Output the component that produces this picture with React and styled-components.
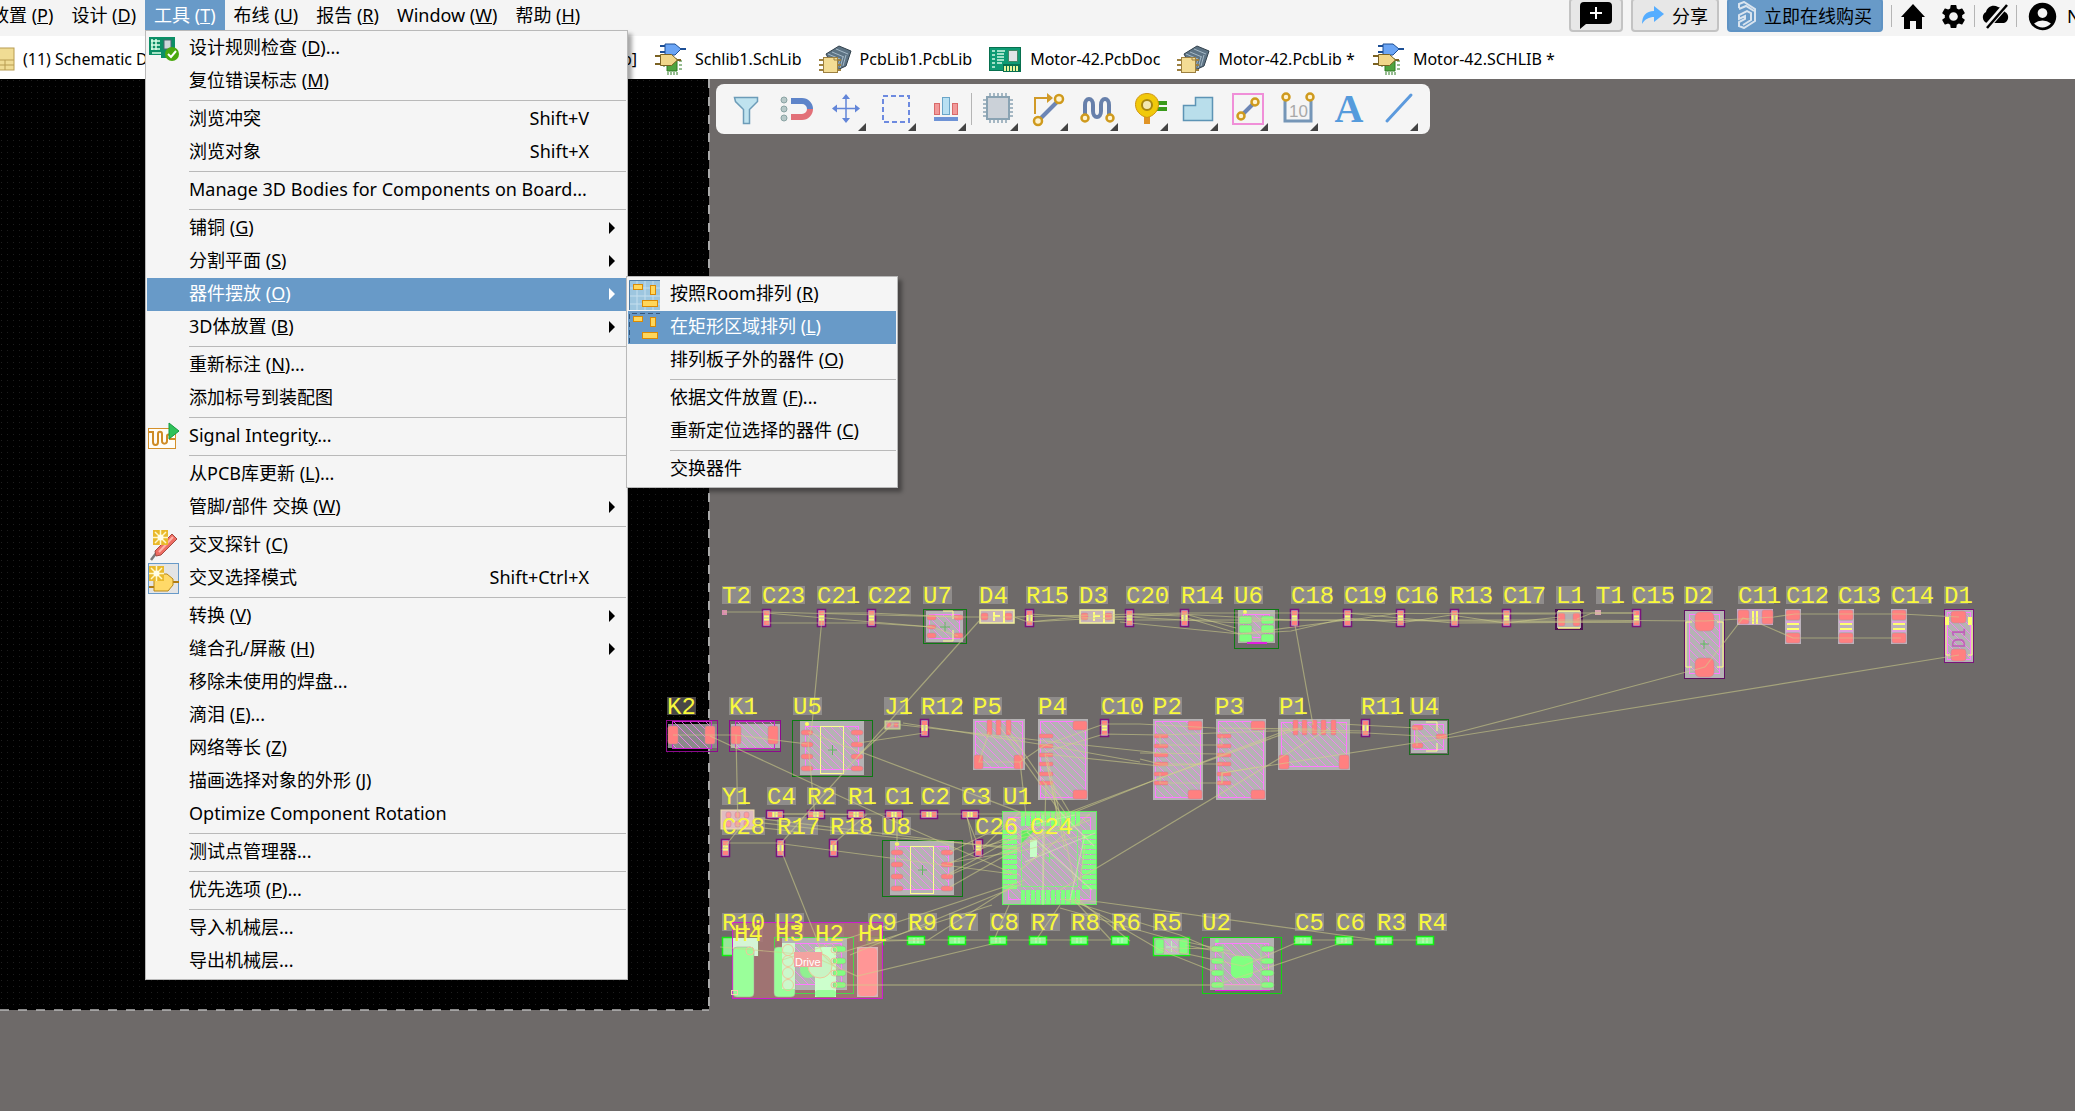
import React from "react";
import styled, { createGlobalStyle } from "styled-components";
import { MdAccountCircle, MdSettings } from "react-icons/md";

const uiFont = `"Noto Sans", "Noto Sans CJK SC", sans-serif`;

const GlobalStyle = createGlobalStyle`
    * {
        box-sizing: border-box;
    }
    body {
        margin: 0;
        overflow: hidden;
        font-family: ${uiFont};
        font-size: 18px;
        color: #000;
        background-color: #6e6a69;
    }
    button {
        font: inherit;
        color: inherit;
        border: none;
        background: none;
        padding: 0;
        white-space: nowrap;
    }
`
const Container = styled.div`
    display: flex;
    flex-direction: column;
    height: 100vh;
`
const MenuBar = styled.header`
    display: flex;
    justify-content: space-between;
    height: 36px;
    background-color: #f4f4f4;
`
const Nav = styled.nav`
    display: flex;
    height: 30px;
    margin-left: -18px;
`
const NavItem = styled.div`
    position: relative;
`
const NavButton = styled.button`
    height: 30px;
    padding: 0 9px;
    line-height: 30px;
    background-color: ${props=>props.$open ? "#689ac8" : "transparent"};
    color: ${props=>props.$open ? "white" : "black"};
`
const Menu = styled.ul`
    position: absolute;
    z-index: 2;
    top: ${props=>props.$sub ? "-2px" : "100%"};
    left: ${props=>props.$sub ? "100%" : "0"};
    width: ${props=>props.$sub ? "272px" : "483px"};
    margin: 0;
    padding: 1px;
    list-style: none;
    color: black;
    background-color: #f5f5f5;
    border: 1px solid #b9b9b9;
    box-shadow: 4px 4px 4px rgba(0, 0, 0, 0.35);
`
const MenuRow = styled.li`
    position: relative;
`
const MenuButton = styled.button`
    display: grid;
    grid-template-columns: 42px 1fr auto 37px;
    align-items: start;
    width: 100%;
    height: 33px;
    line-height: 30px;
    text-align: left;
    background-color: ${props=>props.$active ? "#689ac8" : "transparent"};
    color: ${props=>props.$active ? "white" : "black"};
`
const MenuIcon = styled.svg`
    display: block;
    width: 33px;
    height: 33px;
`
const Arrow = styled.svg`
    width: 6px;
    height: 12px;
    margin: 10px 0 0 20px;
    fill: currentColor;
`
const Separator = styled.li`
    height: 5px;
    padding-top: 2px;
    margin-left: 42px;
    &::after {
        content: "";
        display: block;
        height: 1px;
        background-color: #b9b9b9;
    }
`
const Tools = styled.div`
    display: flex;
    align-items: center;
    gap: 8px;
    height: 32px;
    overflow: hidden;
`
const ToolButton = styled.button`
    display: flex;
    align-items: center;
    justify-content: center;
    gap: 8px;
    height: 34px;
    margin-top: -2px;
    padding: 0 9px;
    border: 2px solid ${props=>props.$primary ? "#5f93c4" : "#c3c3c3"};
    border-radius: 4px;
    background-color: ${props=>props.$primary ? "#689ac8" : "#e7e7e7"};
`
const Status = styled.div`
    display: flex;
    align-items: center;
    height: 32px;
`
const IconButton = styled.button`
    display: flex;
    align-items: center;
    justify-content: center;
    width: ${props=>props.$wide ? "50px" : "41px"};
    height: 32px;
`
const Divider = styled.span`
    width: 1px;
    height: ${props=>props.$tall ? "32px" : "22px"};
    margin-right: ${props=>props.$tall ? "1px" : "0"};
    background-color: #b5b5b5;
`
const UserName = styled.span`
    width: 8px;
    overflow: hidden;
`
const TabBar = styled.div`
    display: flex;
    align-items: center;
    gap: 16px;
    height: 43px;
    padding-top: 2px;
    flex-shrink: 0;
    background-color: white;
    font-size: 16px;
`
const FolderTabs = styled.div`
    display: flex;
    justify-content: space-between;
    flex-shrink: 0;
    width: 656px;
    margin-left: -19px;
`
const Tab = styled.button`
    display: flex;
    align-items: center;
    gap: 8px;
    height: 41px;
`
const TabIcon = styled.svg`
    width: 34px;
    height: 34px;
`
const Workspace = styled.main`
    position: relative;
    flex: 1;
    min-height: 0;
    background-color: #6e6a69;
`
const Board = styled.svg`
    display: block;
    width: 100%;
    height: 100%;
`
const ActiveBar = styled.div`
    position: absolute;
    top: 5px;
    left: 716px;
    display: flex;
    align-items: center;
    height: 50px;
    padding: 0 7px 0 5px;
    border-radius: 8px;
    background-color: #f5f5f5;
`
const ActiveButton = styled.button`
    width: 50px;
    height: 50px;
    svg {
        display: block;
    }
`
const Designator = styled.text`
    font-family: "Liberation Mono", monospace;
    font-size: 24px;
    fill: #f8f83c;
`
const RoomName = styled.text`
    font-family: "Liberation Sans", sans-serif;
    font-size: 11px;
    fill: white;
`

/* "_X" in a label marks the access key */
const Label = ({ text }) => {
    const at = text.indexOf("_");
    if (at < 0) return <span>{text}</span>;
    return (
        <span>{text.slice(0, at)}<u>{text[at + 1]}</u>{text.slice(at + 2)}</span>
    )
}

const Spark = () => (
    <>
        <rect x="2" y="1" width="15" height="15" fill="#e9b92c" />
        <path d="M9.500 1v15M2 8.500h15M4 3l11 11M15 3L4 14" stroke="#fff8c8" strokeWidth="1.500" />
        <circle cx="9.500" cy="8.500" r="3" fill="#fffde8" />
    </>
)
const RoomBlocks = () => (
    <g fill="#ffd75a" stroke="#d98a05" strokeWidth="1">
        <rect x="5.500" y="6.500" width="9" height="5" />
        <rect x="22.500" y="7.500" width="5" height="9" />
        <rect x="14.500" y="22.500" width="15" height="6" />
    </g>
)

const menuIcons = {
    drc: (
        <>
            <rect x="2" y="5" width="26" height="18" fill="#0c8f66" />
            <path d="M4 9h9M4 13h9M4 17h9M5 21h9M5 7v11M9 7v11" stroke="#d8ffe6" strokeWidth="1.500" />
            <rect x="17" y="8" width="7" height="9" fill="#cfd8dc" stroke="#4d6770" />
            <path d="M14 23v3h8v-3" fill="#0c8f66" />
            <circle cx="25" cy="22" r="7" fill="#4aa80f" />
            <path d="M21 22l3 3 5-6" stroke="white" strokeWidth="2" fill="none" />
        </>
    ),
    signal: (
        <>
            <rect x="1.500" y="8.500" width="27" height="20" fill="#fffdf6" stroke="#d4902a" />
            <path d="M2 12h4v10c0 4 5 4 5 0v-8c0-3 4-3 4 0v7c0 4 5 3 5 0v-5c0-2 3-2 3 0v3h5" fill="none" stroke="#cf8b24" strokeWidth="2" />
            <path d="M22 3v16l10-8z" fill="#2fc25a" stroke="#169a40" />
        </>
    ),
    probe: (
        <>
            <path d="M4 31l6-8" stroke="#7a7a7a" strokeWidth="2.500" />
            <path d="M8 22L25 5l5 5-16 16-5 1z" fill="#ee6d63" stroke="#a54a42" />
            <path d="M12 23L26 8" stroke="#ffb3aa" strokeWidth="2" />
            <g transform="translate(4 0)"><Spark /></g>
        </>
    ),
    select: (
        <>
            <rect x="1.500" y="1.500" width="30" height="30" fill="#e4e4e4" stroke="#689ac8" />
            <path d="M2 25h6M26 20h6" stroke="#b07c10" strokeWidth="2" />
            <path d="M7 12h13l6 5v6l-5 6H7z" fill="#ffd968" stroke="#b98714" />
            <g transform="translate(0 3)"><Spark /></g>
        </>
    ),
    room: (
        <>
            <rect x="1" y="2" width="31" height="30" fill="#9dc6df" />
            <path d="M1 10h31M1 18h31M1 26h31M9 2v30M17 2v30M25 2v30" stroke="#c5dfee" />
            <path d="M1.500 32V2.500H32" stroke="#4f7ca5" fill="none" />
            <RoomBlocks />
        </>
    ),
    area: (
        <>
            <path d="M1.500 32V2.500H32" stroke="#35567a" fill="none" strokeDasharray="5 3" />
            <g transform="translate(0 -1)"><RoomBlocks /></g>
        </>
    ),
}

const placement = [
    { text: "按照Room排列 (_R)", icon: "room" },
    { text: "在矩形区域排列 (_L)", icon: "area", active: true },
    { text: "排列板子外的器件 (_O)" },
    null,
    { text: "依据文件放置 (_F)..." },
    { text: "重新定位选择的器件 (_C)" },
    null,
    { text: "交换器件" },
]

const toolsMenu = [
    { text: "设计规则检查 (_D)...", icon: "drc" },
    { text: "复位错误标志 (_M)" },
    null,
    { text: "浏览冲突", keys: "Shift+V" },
    { text: "浏览对象", keys: "Shift+X" },
    null,
    { text: "Manage 3D Bodies for Components on Board..." },
    null,
    { text: "铺铜 (_G)", more: true },
    { text: "分割平面 (_S)", more: true },
    { text: "器件摆放 (_O)", more: true, active: true, items: placement },
    { text: "3D体放置 (_B)", more: true },
    null,
    { text: "重新标注 (_N)..." },
    { text: "添加标号到装配图" },
    null,
    { text: "Signal Integrit_y...", icon: "signal" },
    null,
    { text: "从PCB库更新 (_L)..." },
    { text: "管脚/部件 交换 (_W)", more: true },
    null,
    { text: "交叉探针 (_C)", icon: "probe" },
    { text: "交叉选择模式", icon: "select", keys: "Shift+Ctrl+X" },
    null,
    { text: "转换 (_V)", more: true },
    { text: "缝合孔/屏蔽 (_H)", more: true },
    { text: "移除未使用的焊盘..." },
    { text: "滴泪 (_E)..." },
    { text: "网络等长 (_Z)" },
    { text: "描画选择对象的外形 (_J)" },
    { text: "Optimize Component Rotation" },
    null,
    { text: "测试点管理器..." },
    null,
    { text: "优先选项 (_P)..." },
    null,
    { text: "导入机械层..." },
    { text: "导出机械层..." },
]

const navItems = [
    { text: "放置 (_P)" },
    { text: "设计 (_D)" },
    { text: "工具 (_T)", items: toolsMenu },
    { text: "布线 (_U)" },
    { text: "报告 (_R)" },
    { text: "Window (_W)" },
    { text: "帮助 (_H)" },
]

const MenuList = ({ items, sub }) => (
    <Menu $sub={sub}>
        {items.map((item, i) => item === null ? <Separator key={i} /> : (
            <MenuRow key={i}>
                <MenuButton $active={item.active}>
                    <MenuIcon viewBox="0 0 33 33" fill="none">{menuIcons[item.icon]}</MenuIcon>
                    <Label text={item.text} />
                    <span>{item.keys}</span>
                    {item.more && <Arrow viewBox="0 0 6 12"><path d="M0 0l6 6-6 6z" /></Arrow>}
                </MenuButton>
                {item.items && <MenuList items={item.items} sub />}
            </MenuRow>
        ))}
    </Menu>
)

const tabIcons = {
    folder: (
        <>
            <rect x="12" y="6" width="21" height="22" fill="#f0dc94" stroke="#b89c50" />
            <path d="M12 18h21M12 23h21M24 18v10" stroke="#b89c50" />
        </>
    ),
    schlib: (
        <>
            <path d="M14 17h10v12H14z" fill="#4fa33f" stroke="#2f7a25" />
            <path d="M12 20h-2M12 24h-2M26 19h3M26 23h3M26 27h3M15 30v3M18 30v3M21 30v3M24 30v3" stroke="#2f7a25" />
            <path d="M7 4h6M7 10h6M27 7h6" stroke="#1d4f95" strokeWidth="2" />
            <path d="M12 2h10l6 5-6 6H12z" fill="#6ba5f5" stroke="#1d4f95" />
            <path d="M2 14h6M2 22h6M24 18h4" stroke="#7b6222" strokeWidth="2" />
            <path d="M7.500 12.500h11l6 5.500-6 5.500h-11z" fill="#f0d68a" stroke="#7b6222" />
        </>
    ),
    pcblib: (
        <>
            <path d="M8 12L21 4l12 5-5 15-11 5z" fill="#5d7384" stroke="#33424d" />
            <path d="M10 12l12 5M14 10l12 5M18 7l12 5M22 17l-3 11M25 15l-3 11M28 13l-3 11" stroke="#a6bac8" />
            <path d="M1 18h5M1 23h5M1 28h5M20 18h3M20 23h3M20 28h3" stroke="#9d8040" strokeWidth="2" />
            <rect x="5.500" y="15.500" width="14" height="15" fill="#f3dc94" stroke="#9d8040" />
            <path d="M16 15.500v2.500h3.500" stroke="#9d8040" />
        </>
    ),
    pcbdoc: (
        <>
            <rect x="1.500" y="5.500" width="31" height="23" fill="#0e9b74" stroke="#08704f" />
            <path d="M4 9h3M4 13h3M4 17h3M4 21h3M4 25h3M9 9h8M9 12h7M9 15h7M9 18h7M9 21h5" stroke="#d4f9e4" strokeWidth="1.500" />
            <rect x="20.500" y="8.500" width="9" height="11" fill="#dfe5e7" stroke="#486" />
            <path d="M15 22h18v8H15z" fill="#08704f" />
            <path d="M17 24v5M20 24v5M23 24v5M26 24v5M29 24v5" stroke="#e8f59b" strokeWidth="2" />
        </>
    ),
}

const tabs = [
    { text: "Schlib1.SchLib", icon: "schlib" },
    { text: "PcbLib1.PcbLib", icon: "pcblib" },
    { text: "Motor-42.PcbDoc", icon: "pcbdoc" },
    { text: "Motor-42.PcbLib *", icon: "pcblib" },
    { text: "Motor-42.SCHLIB *", icon: "schlib" },
]

const node = { fill: "#fff3cf", stroke: "#cf9a1d", strokeWidth: 2.5 }

const activeTools = [
    { name: "Filter", art: <path d="M13.500 13.500h23v4l-8 8v14h-6v-14l-8-8z" fill="#bfe3ef" stroke="#6c9cb8" strokeWidth="1.500" /> },
    { name: "Snap", art: (
        <>
            <path d="M20 17h11a8 8 0 0 1 8 8" stroke="#5e84c9" strokeWidth="6" />
            <path d="M20 33h11a8 8 0 0 0 8-8" stroke="#e27078" strokeWidth="6" />
            <circle cx="13" cy="16" r="3" fill="#b8c9c9" stroke="#8aa3a3" />
            <circle cx="13" cy="25" r="3" fill="#b8c9c9" stroke="#8aa3a3" />
            <circle cx="13" cy="34" r="3" fill="#b8c9c9" stroke="#8aa3a3" />
        </>
    ) },
    { name: "Move", menu: true, art: (
        <>
            <path d="M25 13v23M14 24.500h22" stroke="#6285d8" strokeWidth="1.500" />
            <path d="M25 10l-4 5h8zM25 39l-4-5h8zM11 24.500l5-4v8zM39 24.500l-5-4v8z" fill="#6285d8" />
        </>
    ) },
    { name: "Select", menu: true, art: <rect x="12" y="12" width="26" height="26" stroke="#6d8ae0" strokeWidth="2" strokeDasharray="5 3" /> },
    { name: "Align", menu: true, art: (
        <>
            <rect x="13.500" y="19.500" width="5" height="11" fill="#f29a9a" stroke="#d96a6a" />
            <rect x="21.500" y="13.500" width="7" height="17" fill="#b8e0f2" stroke="#6aa5c8" />
            <rect x="31.500" y="19.500" width="5" height="11" fill="#f29a9a" stroke="#d96a6a" />
            <rect x="13" y="33" width="24" height="4" fill="#6e93d6" />
        </>
    ) },
    { name: "Component", menu: true, art: (
        <>
            <path d="M17 9v30M21 9v30M25 9v30M29 9v30M33 9v30M10 16h30M10 20h30M10 24h30M10 28h30M10 32h30" stroke="#8aa3b3" strokeWidth="1.500" />
            <rect x="14" y="13" width="22" height="22" fill="#cbd1d8" stroke="#8aa3b3" strokeWidth="2" />
        </>
    ) },
    { name: "Route", menu: true, art: (
        <>
            <path d="M12 30V14h14" stroke="#d19a27" strokeWidth="2" />
            <path d="M24 9l6 5-6 5z" fill="#d19a27" />
            <path d="M15 37L36 16" stroke="#6d86b5" strokeWidth="4" />
            <circle cx="15" cy="37" r="4" {...node} /><circle cx="36" cy="15" r="4" {...node} />
        </>
    ) },
    { name: "Tune", menu: true, art: (
        <>
            <path d="M12 33V21c0-8 8-8 8 0v6c0 8 8 8 8 0v-6c0-8 8-8 8 0v12" stroke="#6780ab" strokeWidth="4" />
            <circle cx="12" cy="34" r="3.500" {...node} /><circle cx="37" cy="34" r="3.500" {...node} />
        </>
    ) },
    { name: "Via", menu: true, art: (
        <>
            <path d="M30 19h14M30 25h14" stroke="#399a1a" strokeWidth="4" />
            <path d="M24 28v12" stroke="#e09426" strokeWidth="6" />
            <path d="M24 9.500c7 0 11.500 5 11.500 11S31 32 24 33.500C17 32 12.500 26.500 12.500 20.500S17 9.500 24 9.500z" fill="#f1c90b" stroke="#cf9310" />
            <circle cx="24" cy="21" r="5" fill="#f4e8b2" stroke="#a88610" strokeWidth="2" />
        </>
    ) },
    { name: "Polygon", menu: true, art: <path d="M10.500 21.500h12v-8h17v23h-29z" fill="#b9deeb" stroke="#5d94b5" strokeWidth="1.500" /> },
    { name: "Room", menu: true, art: (
        <>
            <rect x="10" y="10" width="30" height="30" stroke="#f08fd8" strokeWidth="2" />
            <path d="M18 32l14-14" stroke="#6d86b5" strokeWidth="4" />
            <circle cx="18" cy="32" r="3.500" {...node} /><circle cx="32" cy="18" r="3.500" {...node} />
        </>
    ) },
    { name: "Dimension", menu: true, art: (
        <>
            <path d="M12 17v20h26V17" stroke="#7596b7" strokeWidth="3" />
            <circle cx="13" cy="13" r="3.500" {...node} /><circle cx="37" cy="13" r="3.500" {...node} />
            <text x="16" y="33" fontSize="17" fill="#a9a9a9" fontFamily="Liberation Sans">10</text>
        </>
    ) },
    { name: "Text", art: <text x="26" y="38" textAnchor="middle" fontSize="40" fill="#559bdc" fontWeight="bold" fontFamily="Liberation Serif">A</text> },
    { name: "Line", menu: true, art: <path d="M14 37l24-26" stroke="#5c9add" strokeWidth="3" strokeLinecap="round" /> },
]

/* designators: name, left, top */
const designators = [
    ["T2", 722, 586], ["C23", 762, 586], ["C21", 817, 586], ["C22", 868, 586], ["U7", 923, 586], ["D4", 979, 586],
    ["R15", 1026, 586], ["D3", 1079, 586], ["C20", 1126, 586], ["R14", 1181, 586], ["U6", 1234, 586], ["C18", 1291, 586],
    ["C19", 1344, 586], ["C16", 1396, 586], ["R13", 1450, 586], ["C17", 1503, 586], ["L1", 1556, 586], ["T1", 1596, 586],
    ["C15", 1632, 586], ["D2", 1684, 586], ["C11", 1738, 586], ["C12", 1786, 586], ["C13", 1838, 586], ["C14", 1891, 586], ["D1", 1944, 586],
    ["K2", 667, 697], ["K1", 729, 697], ["U5", 793, 697], ["J1", 884, 697], ["R12", 921, 697], ["P5", 973, 697], ["P4", 1038, 697],
    ["C10", 1101, 697], ["P2", 1153, 697], ["P3", 1215, 697], ["P1", 1279, 697], ["R11", 1361, 697], ["U4", 1410, 697],
    ["Y1", 722, 787], ["C4", 767, 787], ["R2", 807, 787], ["R1", 848, 787], ["C1", 885, 787], ["C2", 921, 787], ["C3", 962, 787], ["U1", 1003, 787],
    ["C28", 722, 817], ["R17", 777, 817], ["R18", 830, 817], ["U8", 882, 817], ["C26", 975, 817], ["C24", 1030, 817],
    ["R10", 722, 913], ["U3", 775, 913], ["C9", 868, 913], ["R9", 908, 913], ["C7", 949, 913], ["C8", 990, 913], ["R7", 1031, 913],
    ["R8", 1071, 913], ["R6", 1112, 913], ["R5", 1153, 913], ["U2", 1202, 913], ["C5", 1295, 913], ["C6", 1336, 913], ["R3", 1377, 913], ["R4", 1418, 913],
    ["H4", 734, 924], ["H3", 775, 924], ["H2", 815, 924], ["H1", 858, 924],
]

/* small upright parts: left, top, resistor */
const uprights = [
    [762, 609], [817, 609], [867, 609], [1025, 609, 1], [1125, 609], [1180, 609, 1], [1290, 609], [1343, 609], [1396, 609],
    [1450, 609, 1], [1502, 609], [1632, 609], [920, 719, 1], [1100, 719], [1361, 719, 1],
    [721, 839], [776, 839, 1], [829, 839, 1], [974, 839],
]
const flats = [[766, 810], [807, 810], [847, 810], [885, 810], [920, 810], [961, 810]]
const greens = [866, 907, 948, 989, 1029, 1070, 1111, 1294, 1335, 1375, 1416]

const nets = [
    "724,612 765,612 957,617 1014,617 1180,613 1290,613 1556,614", "766,613 932,627 958,636", "766,623 870,623 932,627",
    "821,613 870,613 958,617", "822,618 812,725 808,742 815,818", "979,621 904,705 808,812 777,848", "1014,617 1028,622 1080,617",
    "1029,614 1128,620 1290,620 1640,622", "1028,622 1180,614 1290,620", "1110,616 1240,623 1270,620 1556,620",
    "1130,614 1181,616 1240,634 1347,620", "1120,622 1240,634 1291,631 1347,618 1400,623 1451,615 1505,623 1560,617",
    "1185,614 1236,628", "1346,613 1453,623 1636,622", "1400,613 1344,621", "1450,613 1556,613 1636,613", "1577,619 1592,613 1636,613",
    "1556,620 1705,621 1774,617 1795,614 1901,614 1959,617", "1705,667 1743,618 1763,625 1793,638 1901,638", "1705,667 1540,711 1440,737",
    "1959,655 1540,723 1446,738 1222,773 1222,783", "1295,625 1313,725", "673,735 736,735 807,744", "736,735 738,830 722,850",
    "710,736 900,824 1012,873", "808,732 1020,812", "858,743 924,733", "893,724 858,756", "893,724 1045,741 1160,753",
    "903,723 1045,745 1140,762", "989,732 979,762 1020,762 1045,745", "1020,762 1026,815", "1000,727 1060,812", "1008,730 1070,820",
    "1045,745 1104,724 1140,724 1215,728 1314,729", "1045,752 1104,734 1160,735 1300,730 1365,731", "1045,754 1160,766 1201,764",
    "1160,736 1160,745 1222,745 1222,736", "1160,773 1160,783 1222,783 1222,773 1258,767", "1140,753 1222,754", "1140,759 1160,764 1222,764",
    "1330,728 1060,890", "1300,728 1160,778 1070,812", "1290,729 1150,782 1075,812", "1340,724 1417,728 1417,746", "1300,732 1366,733 1441,737",
    "1045,754 1060,830", "1047,763 1065,850", "1046,783 1043,890", "1052,783 1070,813", "1047,756 1074,880",
    "775,814 924,814 1060,814", "754,818 1020,850", "754,822 900,838 1020,848", "723,843 776,843 1020,875", "735,825 800,832",
    "776,814 822,814 866,815 832,845", "897,814 897,850", "967,816 974,850", "966,815 976,840", "950,852 1025,815 1090,815",
    "950,863 1060,814", "950,875 1075,820", "950,887 1050,830", "947,863 1025,850 1085,835", "947,875 1010,840 1070,812",
    "979,847 1080,825", "980,850 1020,812", "1025,880 782,960", "781,850 823,955 838,970", "1022,884 850,955", "1009,905 994,940",
    "1014,885 928,940 885,941", "1074,900 1111,940", "1075,897 1130,941", "1060,905 1036,940", "1078,902 1160,950 1215,972",
    "1060,908 1163,937 1230,951", "1066,900 1180,935 1217,951", "1060,899 1100,902 1377,940",
    "866,940 1110,940", "1294,940 1430,940", "720,947 810,955 857,976 1000,942", "834,955 992,905", "1160,948 1243,966 1300,941",
    "1171,948 1217,949", "1216,985 1347,941", "1185,945 1265,961", "1030,842 1090,820", "1085,845 1080,880", "1020,870 1090,814",
]

const netsIn = ["1027,832 1092,890", "1043,815 1043,905", "1085,835 1070,900", "1025,862 1095,833", "1060,812 1094,846", "1030,825 1075,815"]

const Pads = ({ list, color = "#ff8080", r = 2 }) => list.map(([x, y, w, h], i) => (
    <rect key={i} x={x} y={y} width={w} height={h} rx={r} fill={color} stroke="#b88b9c" strokeWidth="0.500" />
))

const Body = ({ x, y, w, h, inset = 3 }) => (
    <>
        <rect x={x} y={y} width={w} height={h} fill="#b5b3b4" />
        <rect x={x + inset + 0.5} y={y + inset + 0.5} width={w - 2 * inset - 1} height={h - 2 * inset - 1} fill="url(#hatch)" stroke="#ff7aff" />
    </>
)

const Outline = ({ x, y, w, h, color }) => (
    <rect x={x + 0.5} y={y + 0.5} width={w - 1} height={h - 1} fill="none" stroke={color} />
)

const Small = ({ x, y, resistor }) => (
    <g transform={`translate(${x} ${y})`}>
        <rect x="0.500" y="0.500" width="8" height="17" fill="#c3adbd" stroke="#7a137c" strokeWidth="1.500" />
        <path d="M2 2h5v4H2zM2 12h5v4H2z" fill="#ff8080" />
        <path d={resistor ? "M2.500 6v6M6.500 6v6" : "M2 7.500h5M2 10.500h5"} stroke="#ffff70" strokeWidth="2" />
    </g>
)

/* eight-lead package, drawn from its outline corner */
const Soic = ({ x, y }) => (
    <g transform={`translate(${x} ${y})`}>
        <Body x={8} y={1} w={64} h={54} inset={5} />
        <Outline x={0} y={0} w={81} h={57} color="#0d7a12" />
        <rect x="28.500" y="6.500" width="23" height="47" fill="none" stroke="#ffff90" />
        <path d="M36 30h9M40.500 25v10" stroke="#62b662" />
        <circle cx="15" cy="4" r="2" fill="#ffff60" />
        <Pads list={[10, 22, 34, 46].flatMap(py => [[9, py, 12, 5], [59, py, 12, 5]])} r={3} />
    </g>
)

const Header = ({ x }) => (
    <>
        <Body x={x} y={719} w={50} h={81} inset={2} />
        <Pads list={[[x + 35, 721, 14, 9], [x + 35, 790, 14, 9]]} />
        <Pads list={[734, 744, 753, 762, 772, 781].map(y => [x + 1, y, 14, 4])} r={1} />
    </>
)

const Crystal = ({ x, dark }) => (
    <>
        <rect x={x + 2} y={724} width={49} height={24} fill={dark ? "#8a8a8a" : "#b5b3b4"} />
        <rect x={x + 6.5} y={721.5} width={39} height={27} fill="url(#hatch)" stroke="#d020d0" />
        <Outline x={x} y={720} w={52} h={32} color="#8c0a8c" />
        <Pads list={[[x + 2, 726, 10, 18], [x + 39, 726, 10, 18]]} />
    </>
)

const Diode = ({ x }) => (
    <>
        <rect x={x + 1} y={610} width={34} height={13} fill="#c9b3ba" stroke="#f5f59a" strokeWidth="1.500" />
        <Pads list={[[x + 2, 613, 7, 7], [x + 26, 613, 7, 7]]} />
        <path d={`M${x + 15} 612v9M${x + 15} 616h6M${x + 25} 610v13`} stroke="#ffff80" strokeWidth="2" />
    </>
)

const labelWidth = name => name.length * 14 + 1 - (name.endsWith("1") ? 5 : 0) - (name[1] === "1" && name.length > 2 ? 2 : 0)

const leads = [0, 1, 2, 3, 4, 5, 6, 7, 8, 9, 10, 11]

const PcbView = () => (
    <Board role="img" aria-label="PCB">
        <defs>
            <pattern id="grid" width="6" height="6" patternUnits="userSpaceOnUse">
                <rect width="6" height="6" fill="#000" />
                <rect x="1" y="2" width="1" height="1" fill="#1e1e1e" />
            </pattern>
            <pattern id="hatch" width="8" height="8" patternUnits="userSpaceOnUse">
                <path d="M0 0l8 8" stroke="#ff78ff" strokeWidth="0.800" />
            </pattern>
        </defs>
        <g transform="translate(0 -79)">
            <rect x="0" y="79" width="709" height="931" fill="url(#grid)" />
            <path d="M709 79V1010" stroke="#aaa" strokeWidth="2" strokeDasharray="9 9" />
            <path d="M0 1010H709" stroke="#b8b8b8" strokeWidth="1.500" strokeDasharray="9 9" />

            {designators.map(([name, x, y]) => (
                <rect key={name} x={x} y={y} width={labelWidth(name)} height="18" fill={name === "K2" ? "#484646" : "#8f8c8b"} />
            ))}

            <rect x="722" y="610" width="5" height="5" fill="#d98fae" />
            <rect x="1595" y="610" width="6" height="5" fill="#d9a5b2" />
            {uprights.map(([x, y, res]) => <Small key={x + "-" + y} x={x} y={y} resistor={res} />)}
            {flats.map(([x, y]) => <g key={x} transform={`translate(${x + 18} ${y}) rotate(90)`}><Small x={0} y={0} /></g>)}

            <Body x={926} y={611} w={37} h={31} />
            <Outline x={923} y={609} w={44} h={35} color="#0d7a12" />
            <Pads list={[[927, 615, 9, 5], [927, 625, 9, 4], [927, 633, 9, 5], [954, 615, 9, 5], [954, 633, 9, 5]]} />
            <path d="M943 611h10v8M953 630v11h-10" stroke="#ffff90" fill="none" />
            <path d="M940 627h10M945 622v10" stroke="#62b662" />
            <Diode x={979} />
            <Diode x={1079} />

            <Body x={1238} y={609} w={37} h={34} inset={5} />
            <Outline x={1234} y={609} w={45} h={40} color="#0d7a12" />
            <Pads list={[616, 625, 634].flatMap(y => [[1239, y, 13, 8], [1261, y, 13, 8]])} color="#80ff80" />
            <circle cx="1245" cy="612" r="2" fill="#ffff60" />
            <path d="M1247 643h20" stroke="#e020e0" strokeWidth="2" />

            <rect x="1556" y="610" width="26" height="19" fill="#b5b1b3" stroke="#4d1050" strokeWidth="2" />
            <path d="M1558 611h22M1558 628h22" stroke="#ffff90" strokeWidth="1.500" />
            <Pads list={[[1558, 613, 7, 13], [1573, 613, 7, 13]]} />

            <Body x={1685} y={610} w={39} h={68} inset={4} />
            <Outline x={1684} y={610} w={41} h={69} color="#5f1062" />
            <path d="M1692 622h-6v45h6M1717 622h6v45h-6" fill="none" stroke="#ffff80" />
            <Pads list={[[1695, 612, 19, 19], [1695, 658, 19, 19]]} r={5} />
            <path d="M1700 644h9M1704 640v9" stroke="#62b662" />

            <rect x="1737" y="609" width="36" height="16" fill="#c9a9c6" />
            <Pads list={[[1738, 610, 11, 14], [1762, 610, 11, 14]]} />
            <path d="M1753 611v13M1757 611v13" stroke="#ffff70" strokeWidth="2" />
            {[1785, 1838, 1891].map(x => (
                <g key={x}>
                    <rect x={x} y="609" width="16" height="35" fill="#bdb3bc" />
                    <path d={`M${x + 1} 622h14M${x + 1} 631h14`} stroke="#ff8cff" />
                    <Pads list={[[x + 1, 610, 14, 10], [x + 1, 633, 14, 10]]} />
                    <path d={`M${x + 2} 624h12M${x + 2} 629h12`} stroke="#ffff70" strokeWidth="2" />
                </g>
            ))}

            <Body x={1945} y={610} w={28} h={52} inset={2} />
            <Outline x={1944} y={609} w={30} h={54} color="#7a137c" />
            <path d="M1947 617v8M1970 617v8" stroke="#ffff70" strokeWidth="4" />
            <path d="M1946 625v30h4M1972 625v30h-4" stroke="#ffff80" fill="none" />
            <Pads list={[[1951, 611, 15, 12], [1951, 649, 15, 12]]} r={3} />
            <text x="1965" y="648" transform="rotate(-90 1965 648)" fontSize="17" fill="#c060b8" fontFamily="DejaVu Sans Mono">D1</text>

            <Crystal x={666} dark />
            <Crystal x={729} />
            <Soic x={792} y={720} />
            <Soic x={882} y={840} />
            <rect x="885" y="721" width="15" height="8" fill="#c9a6a6" stroke="#c9e58c" />
            <Pads list={[[887, 723, 4, 4], [894, 723, 4, 4]]} r={0} />

            <Body x={973} y={719} w={52} h={51} inset={2} />
            <Pads list={[987, 996, 1006].map(x => [x, 720, 5, 15])} r={1} />
            <Pads list={[[974, 755, 9, 14], [1014, 755, 9, 14]]} />
            <Header x={1038} />
            <Header x={1153} />
            <Header x={1216} />
            <Body x={1278} y={719} w={72} h={51} inset={3} />
            <Pads list={[1293, 1302, 1312, 1321, 1331].map(x => [x, 720, 5, 15])} r={1} />
            <Pads list={[[1279, 755, 10, 14], [1339, 755, 10, 14]]} />

            <Body x={1411} y={721} w={36} h={32} />
            <Outline x={1409} y={719} w={40} h={36} color="#1d6b20" />
            <Pads list={[[1412, 725, 11, 5], [1412, 743, 11, 5], [1436, 734, 11, 5]]} />
            <path d="M1426 722h11v9M1437 743v8h-11" stroke="#ffff90" fill="none" />

            <rect x="721" y="810" width="33" height="19" fill="#e0bcc0" stroke="#f2dfb0" />
            <Pads list={[726, 735, 744].flatMap(x => [[x, 812, 5, 6], [x, 821, 5, 6]])} color="#ff9c9c" />

            <Body x={1003} y={812} w={93} h={93} inset={5} />
            <Outline x={1002} y={811} w={95} h={94} color="#5cf05c" />
            {leads.map(i => (
                <g key={i} fill="#80ff80">
                    <rect x={1003} y={830 + i * 5} width="14" height="4" />
                    <rect x={1082} y={830 + i * 5} width="14" height="4" />
                    <rect x={1021 + i * 5} y={812} width="4" height="14" />
                    <rect x={1021 + i * 5} y={890} width="4" height="14" />
                </g>
            ))}
            <rect x="1021.500" y="830.500" width="56" height="56" fill="none" stroke="#80f080" />
            <path d="M1022 831h12l-12 12z" fill="#60f060" />
            <path d="M1045 858h9M1049.500 853v9" stroke="#7cf07c" />
            <rect x="1030" y="840" width="7" height="17" fill="#c8ffc8" />

            {greens.map(x => (
                <g key={x}>
                    <rect x={x + 0.5} y="936.500" width="17" height="8" fill="#8aff96" stroke="#12f012" strokeWidth="1.500" />
                    <path d={`M${x + 7} 938v5M${x + 11} 938v5`} stroke="#c8ffc0" />
                </g>
            ))}
            <rect x="1153.500" y="937.500" width="36" height="18" fill="#c0c0c0" stroke="#12f012" strokeWidth="1.500" />
            <Pads list={[[1155, 939, 9, 15], [1179, 939, 9, 15]]} color="#80ff80" />
            <path d="M1166 947h11M1171.500 941v11" stroke="#c0eec0" />
            <rect x="1165" y="940" width="13" height="13" fill="url(#hatch)" />

            <Body x={1210} y={938} w={64} h={52} inset={5} />
            <Outline x={1202} y={937} w={80} h={57} color="#12d412" />
            <Pads list={[946, 958, 970, 982].flatMap(y => [[1211, y, 13, 6], [1261, y, 13, 6]])} color="#80ff80" r={3} />
            <path d="M1223 944v46M1261 944v46" stroke="#90e890" />
            <rect x="1231" y="956" width="22" height="22" rx="5" fill="#80ff80" />
            <path d="M1215 990.500h55" stroke="#f010f0" />
            <circle cx="1217" cy="941" r="2" fill="#80ff80" />

            <rect x="722.500" y="937.500" width="36" height="18" fill="#98e898" stroke="#12f012" strokeWidth="1.500" />
            <rect x="732.500" y="922.500" width="150" height="76" fill="#a87474" fillOpacity="0.850" stroke="#d01cd0" />
            <rect x="733" y="938" width="25" height="18" fill="#d5f5d5" />
            <Body x={782} y={938} w={65} h={52} inset={5} />
            <Outline x={774} y={937} w={80} h={57} color="#4ad84a" />
            <Pads list={[[733, 947, 21, 50], [774, 947, 21, 50]]} color="#9aff9a" r={4} />
            <rect x="815" y="947" width="21" height="50" fill="#ccffcc" />
            <rect x="815" y="990" width="21" height="7" rx="3" fill="#9aff9a" />
            <rect x="857" y="947" width="21" height="50" fill="#d8b4b8" />
            <rect x="858" y="948" width="19" height="48" rx="4" fill="#ff9696" />
            <rect x="782" y="943" width="13" height="46" fill="#ccf8cc" />
            <Pads list={[946, 958, 970, 982].map(y => [833, y, 13, 6])} color="#80ff80" r={3} />
            <circle cx="808" cy="970" r="8" fill="#90f090" />
            <circle cx="820" cy="966" r="12" fill="#c8f4c4" stroke="#eec79a" />
            {[950, 961, 973, 985].map(y => <circle key={y} cx="788" cy={y} r="5.500" fill="none" stroke="#eec79a" />)}
            {[950, 961, 973, 985].map(y => <circle key={"r" + y} cx="834" cy={y} r="3" fill="none" stroke="#eec79a" />)}
            <circle cx="750" cy="951" r="4" fill="none" stroke="#eec79a" />
            <rect x="731.500" y="990.500" width="6" height="4" fill="none" stroke="#f5d5b0" />

            <g fill="none" stroke="#d2d28a" strokeOpacity="0.550" strokeWidth="1.200">
                {nets.map((points, i) => <polyline key={i} points={points} />)}
                {netsIn.map((points, i) => <polyline key={"n" + i} points={points} stroke="#e0e8b0" />)}
                <polyline points="834,985 1268,985" strokeWidth="2" strokeOpacity="0.350" />
            </g>

            <rect x="794" y="952" width="28" height="15" fill="#f3a3a0" />
            <RoomName x="795" y="966">Drive</RoomName>
            {designators.map(([name, x, y]) => <Designator key={name} x={x} y={y + 17}>{name}</Designator>)}
        </g>
    </Board>
)

const App = () => {
    return (
        <Container>
            <GlobalStyle />
            <MenuBar>
                <Nav>
                    {navItems.map(item => (
                        <NavItem key={item.text}>
                            <NavButton $open={!!item.items}><Label text={item.text} /></NavButton>
                            {item.items && <MenuList items={item.items} />}
                        </NavItem>
                    ))}
                </Nav>
                <Tools>
                    <ToolButton aria-label="Comment">
                        <svg width="32" height="28" viewBox="0 0 32 28">
                            <path d="M4 1h24a4 4 0 0 1 4 4v14a4 4 0 0 1-4 4H6l-6 5V5a4 4 0 0 1 4-4z" />
                            <path d="M16 6v12M10 12h12" stroke="white" strokeWidth="2" />
                        </svg>
                    </ToolButton>
                    <ToolButton>
                        <svg width="22" height="20" viewBox="0 0 22 20"><path d="M12 1l10 8-10 8v-5C7 12 3 14 0 19 0 11 4 6 12 6z" fill="#55adff" /></svg>
                        分享
                    </ToolButton>
                    <ToolButton $primary>
                        <svg width="18" height="28" viewBox="0 0 18 28" fill="none" stroke="#d9e4ef" strokeWidth="2">
                            <path d="M1 7V3l5-2 11 7v12L6 27l-5-2v-4l6-3v-3l-6 3v-4l8-4 4 2v7L5 24M1 8l7-3 8 5" />
                        </svg>
                        <span>立即在线购买</span>
                    </ToolButton>
                    <Status>
                        <Divider />
                        <IconButton aria-label="Home">
                            <svg width="24" height="25" viewBox="0 0 24 25"><path d="M12 0l12 13h-3v12h-6v-8H9v8H3V13H0z" /></svg>
                        </IconButton>
                        <IconButton aria-label="Settings"><MdSettings size={29} /></IconButton>
                        <Divider />
                        <IconButton aria-label="Offline">
                            <svg width="27" height="26" viewBox="0 0 27 26">
                                <path d="M5 20a6 6 0 0 1-1-11c1-5 7-8 12-5l3 1 4 4a6 6 0 0 1-1 11z" />
                                <path d="M4 25L24 2" stroke="#f4f4f4" strokeWidth="6" />
                                <path d="M5 25L25 2" stroke="#000" strokeWidth="2.500" />
                            </svg>
                        </IconButton>
                        <Divider />
                        <IconButton $wide aria-label="Account"><MdAccountCircle size={33} /></IconButton>
                        <UserName>N</UserName>
                    </Status>
                </Tools>
            </MenuBar>
            <TabBar>
                <FolderTabs>
                    <Tab><TabIcon viewBox="0 0 34 34" fill="none">{tabIcons.folder}</TabIcon>(11) Schematic Documents</Tab>
                    <Tab>[SchLib]</Tab>
                </FolderTabs>
                {tabs.map(tab => (
                    <Tab key={tab.text}>
                        <TabIcon viewBox="0 0 34 34" fill="none">{tabIcons[tab.icon]}</TabIcon>
                        {tab.text}
                    </Tab>
                ))}
            </TabBar>
            <Workspace>
                <PcbView />
                <ActiveBar>
                    {activeTools.map((tool, i) => (
                        <React.Fragment key={tool.name}>
                            {i === 5 && <Divider $tall />}
                            <ActiveButton aria-label={tool.name}>
                                <svg width="50" height="50" viewBox="0 0 50 50" fill="none">
                                    {tool.art}
                                    {tool.menu && <path d="M45 39v8h-8z" fill="#444" />}
                                </svg>
                            </ActiveButton>
                        </React.Fragment>
                    ))}
                </ActiveBar>
            </Workspace>
        </Container>
    )
}
export default App
